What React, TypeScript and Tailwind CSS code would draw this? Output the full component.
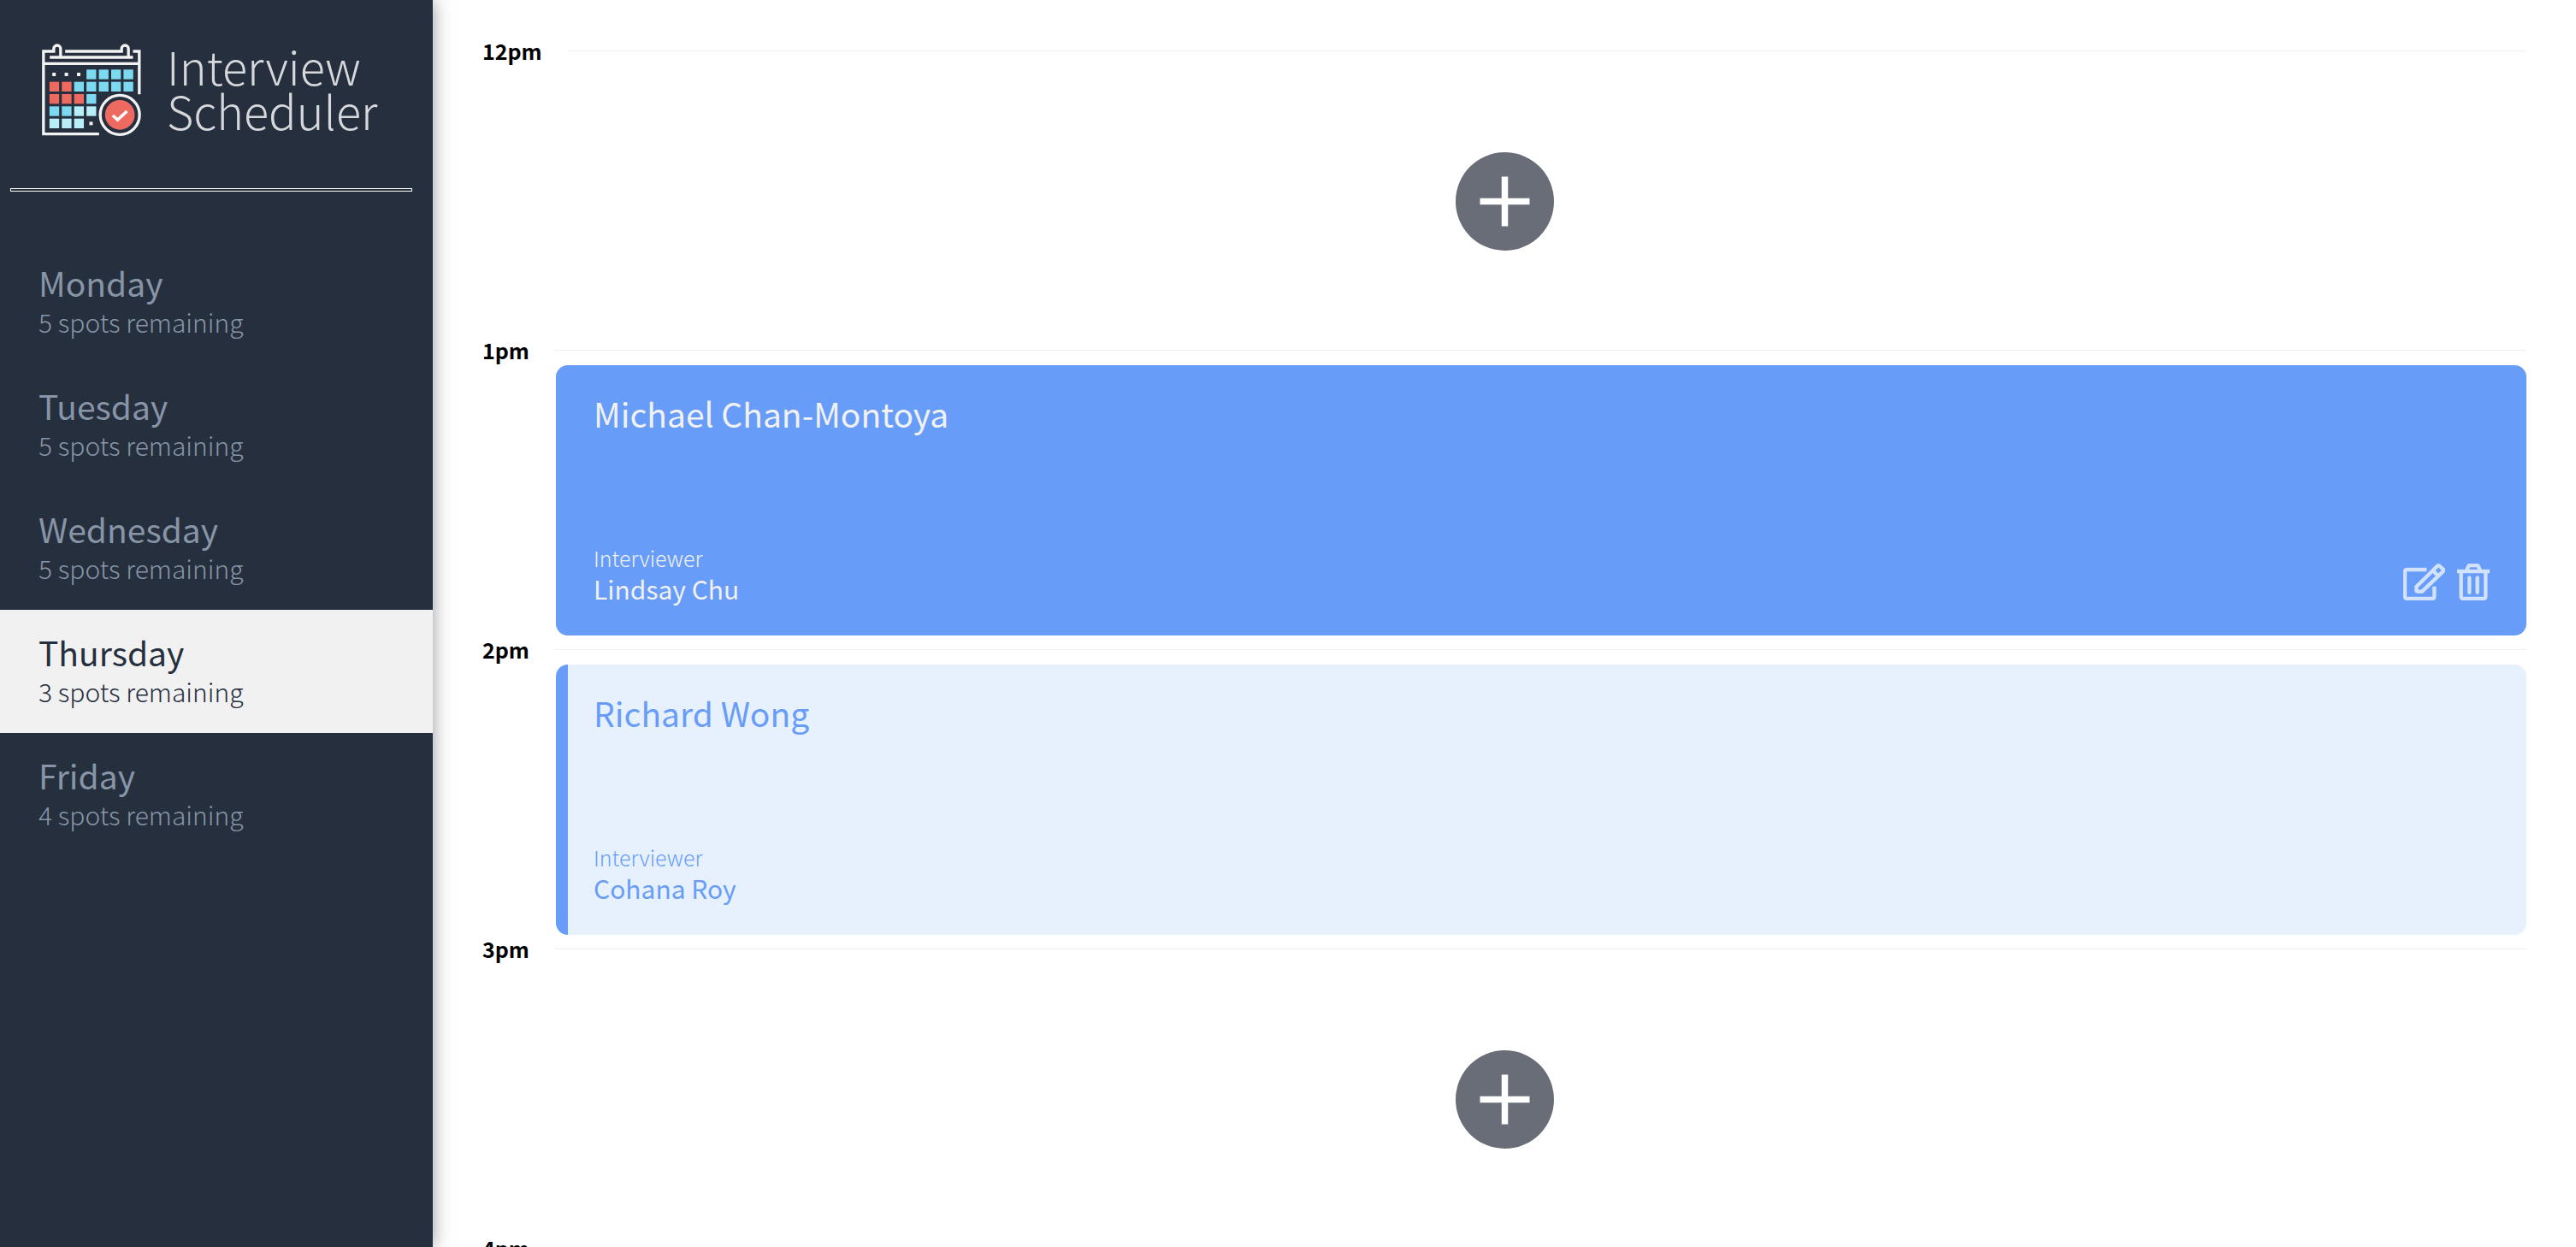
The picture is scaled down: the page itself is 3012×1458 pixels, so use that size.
import React from "react";

type Day = { name: string; spots: number };
type Interview = { student: string; interviewer: string };
type Slot = { time: string; interview?: Interview };

const days: Day[] = [
  { name: "Monday", spots: 5 },
  { name: "Tuesday", spots: 5 },
  { name: "Wednesday", spots: 5 },
  { name: "Thursday", spots: 3 },
  { name: "Friday", spots: 4 },
];

const slots: Slot[] = [
  { time: "12pm" },
  { time: "1pm", interview: { student: "Michael Chan-Montoya", interviewer: "Lindsay Chu" } },
  { time: "2pm", interview: { student: "Richard Wong", interviewer: "Cohana Roy" } },
  { time: "3pm" },
  { time: "4pm" },
];

const BLUE = "#7dd9f0";
const RED = "#ee6a61";
const PALE = "#b8eef8";

const cells: (string | null)[][] = [
  ["dot", "dot", "dot", BLUE, BLUE, BLUE, BLUE],
  [RED, RED, BLUE, BLUE, BLUE, BLUE, BLUE],
  [RED, RED, RED, BLUE, null, null, null],
  [BLUE, BLUE, PALE, PALE, null, null, null],
  [PALE, PALE, PALE, "dot", null, null, null],
];

function CalendarLogo() {
  return (
    <svg viewBox="0 0 347 324" className="h-[108px] w-[116px] shrink-0" fill="none" aria-hidden="true">
      <g stroke="#f2f2f2" strokeWidth="10">
        <path d="M65 45V18a12 12 0 0 0-24 0V27H5V317H200" />
        <path d="M303 45V18a12 12 0 0 0-24 0V27H81" />
        <path d="M319 27H341V178" />
        <path d="M27 48H319M5 70H341" />
      </g>
      {cells.map((row, r) =>
        row.map((fill, c) => {
          const x = 26 + c * 43.3;
          const y = 91 + r * 43;
          if (fill === null) return null;
          return fill === "dot" ? (
            <rect key={`${r}-${c}`} x={x + 10} y={y + 11} width="12" height="12" fill="#f2f2f2" />
          ) : (
            <rect key={`${r}-${c}`} x={x} y={y} width="34" height="34" fill={fill} />
          );
        }),
      )}
      <circle cx="273" cy="250" r="69" stroke="#f2f2f2" strokeWidth="10" />
      <circle cx="273" cy="250" r="52" fill={RED} />
      <path d="M248 252l17 15 33-30" stroke="#fff" strokeWidth="11" />
    </svg>
  );
}

function EditIcon() {
  return (
    <svg viewBox="0 0 147 129" className="h-[43px] w-[49px]" fill="none" stroke="currentColor" strokeWidth="13" strokeLinejoin="round" aria-hidden="true">
      <path d="M82 21H14q-8 0-8 8V115q0 8 8 8H101q8 0 8-8V80" />
      <path d="M46 81L119 9q5-4 9 0L139 19q4 4 0 9L66 98H51q-5 0-5-5Z" />
      <path d="M104 24L122 43" />
    </svg>
  );
}

function TrashIcon() {
  return (
    <svg viewBox="0 0 114 129" className="h-[43px] w-[38px]" fill="none" stroke="currentColor" strokeWidth="13" aria-hidden="true">
      <path d="M0 27H114" />
      <path d="M32 27L40 9q1-3 5-3H69q4 0 5 3L82 27" />
      <path d="M14 27V115q0 8 8 8H92q8 0 8-8V27" />
      <path d="M43 49V101M71 49V101" strokeLinecap="round" />
    </svg>
  );
}

function DayItem({ day, selected, onSelect }: { day: Day; selected: boolean; onSelect: () => void }) {
  return (
    <li>
      <button
        type="button"
        aria-pressed={selected}
        onClick={onSelect}
        className={`flex h-36 w-full flex-col justify-center pb-[2px] pl-[45px] text-left ${
          selected ? "bg-[#f1f1f1] text-[#262f3e]" : "text-[#8795a6]"
        }`}
      >
        <span className="text-[39px] leading-[48px]">{day.name}</span>
        <span className="text-[30px] leading-[44px] font-light">{day.spots} spots remaining</span>
      </button>
    </li>
  );
}

function Card({ interview, active }: { interview: Interview; active: boolean }) {
  return (
    <div
      className={`ml-[86px] flex h-[316px] items-end justify-between rounded-[14px] border-l-14 border-[#679df8] pt-[30px] pr-[43px] pb-[37px] pl-[30px] ${
        active ? "bg-[#679df8] text-[#f1f1f1]" : "bg-[#e7f1fe] text-[#679df8]"
      }`}
    >
      <div className="flex h-full flex-col justify-between">
        <h2 className="text-[39px] leading-[52px]">{interview.student}</h2>
        <div>
          <h4 className="text-[25px] leading-9 font-light">Interviewer</h4>
          <h3 className="text-[30px] leading-9">{interview.interviewer}</h3>
        </div>
      </div>
      {active && (
        <div className="flex gap-[14px] pb-1 text-[#d3e2fc]">
          <button type="button" aria-label="Edit">
            <EditIcon />
          </button>
          <button type="button" aria-label="Delete">
            <TrashIcon />
          </button>
        </div>
      )}
    </div>
  );
}

export default function App() {
  const [day, setDay] = React.useState("Thursday");
  return (
    <div className="flex h-screen overflow-hidden bg-white font-['Noto_Sans_CJK_JP','Noto_Sans_CJK_SC',sans-serif]">
      <aside className="z-10 w-[506px] shrink-0 bg-[#262f3e] shadow-[0_0_20px_rgba(38,47,62,0.5)]">
        <div className="flex h-[220px] items-start gap-[30px] pt-[51px] pl-[49px]">
          <CalendarLogo />
          <h1 className="text-[54px] leading-[52px] font-light text-[#d6d8db]">
            Interview
            <br />
            Scheduler
          </h1>
        </div>
        <hr className="mr-6 ml-3 h-1 border border-white" />
        <nav aria-label="Days" className="pt-[57px]">
          <ul>
            {days.map((d) => (
              <DayItem key={d.name} day={d} selected={d.name === day} onSelect={() => setDay(d.name)} />
            ))}
          </ul>
        </nav>
      </aside>
      <main className="min-w-0 flex-1 overflow-hidden px-[58px] pt-[43px]">
        {slots.map((slot, i) => (
          <article key={slot.time}>
            <header className="flex h-[34px] items-center gap-[29px]">
              <h4 className="self-start text-[25px] leading-8 font-bold text-black">{slot.time}</h4>
              <div className="mb-px h-px flex-1 bg-[#f1f1f1]" />
            </header>
            {slot.interview ? (
              <Card interview={slot.interview} active={i === 1} />
            ) : (
              <div className="flex h-[316px] items-center justify-center">
                <button type="button" aria-label="Add" className="rounded-full">
                  <svg viewBox="0 0 115 115" className="size-[115px]" aria-hidden="true">
                    <circle cx="57.5" cy="57.5" r="57.5" fill="#686d77" />
                    <path d="M57.5 28.5v58M28.5 57.5h58" stroke="#fff" strokeWidth="7.5" />
                  </svg>
                </button>
              </div>
            )}
          </article>
        ))}
      </main>
    </div>
  );
}
